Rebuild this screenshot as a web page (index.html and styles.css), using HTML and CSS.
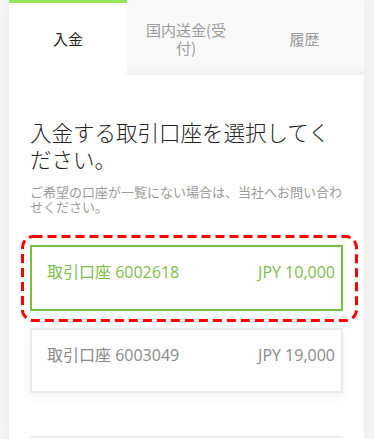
FILE: index.html
```html
<!DOCTYPE html>
<html lang="ja">
<head>
<meta charset="utf-8">
<link rel="stylesheet" href="styles.css">
</head>
<body>
<div class="wrap">
  <div class="tabs">
    <div class="tab active">入金</div>
    <div class="tab">国内送金(受付)</div>
    <div class="tab">履歴</div>
  </div>
  <div class="card">
    <h1 class="title">入金する取引口座を選択してください。</h1>
    <p class="note">ご希望の口座が一覧にない場合は、当社へお問い合わせください。</p>
    <div class="accounts">
      <div class="acct selected">
        <span class="name">取引口座 6002618</span>
        <span class="amt">JPY 10,000</span>
        <svg class="highlight" width="337" height="87" viewBox="0 0 337 87" aria-hidden="true">
          <rect x="1.5" y="1.5" width="334" height="84" rx="11" ry="11" fill="none" stroke="#ff0000" stroke-width="3" stroke-dasharray="9 5"/>
        </svg>
      </div>
      <div class="acct">
        <span class="name">取引口座 6003049</span>
        <span class="amt">JPY 19,000</span>
      </div>
      <div class="acct-more"></div>
    </div>
  </div>
</div>
</body>
</html>
```

FILE: styles.css
```css
html, body {
  margin: 0;
  padding: 0;
}
body {
  background: #f4f4f4;
  font-family: "Open Sans", "Noto Sans CJK JP", sans-serif;
  overflow: hidden;
  height: 439px;
}
.wrap {
  margin-left: 9px;
  width: 355px;
  box-shadow: 0 0 12px rgba(0, 0, 0, 0.04);
}
.tabs {
  display: grid;
  grid-template-columns: 118px 118px 119px;
  height: 75px;
  background: #f9f9f9;
  box-shadow: inset 0 -14px 14px -12px rgba(0, 0, 0, 0.06);
}
.tab {
  display: flex;
  align-items: center;
  justify-content: center;
  text-align: center;
  padding: 3px 14px 0;
  font-size: 15px;
  line-height: 18px;
  color: #9a9a9a;
  font-family: "Noto Sans CJK JP", "Open Sans", sans-serif;
}
.tab.active {
  background: #ffffff;
  color: #222222;
  padding-top: 0;
  border-top: 3px solid #96e65a;
}
.card {
  background: #ffffff;
  padding: 43px 21px 0;
  height: 321px;
}
.title {
  margin: 0;
  font-family: "Noto Sans CJK JP", sans-serif;
  font-weight: 300;
  font-size: 21.5px;
  line-height: 27px;
  color: #222222;
}
.note {
  margin: 12px 0 0;
  font-family: "Noto Sans CJK JP", sans-serif;
  font-size: 13px;
  line-height: 15px;
  color: #9a9a9a;
}
.accounts {
  margin-top: 31px;
  display: flex;
  flex-direction: column;
  gap: 17px;
}
.acct {
  position: relative;
  display: flex;
  justify-content: space-between;
  height: 65px;
  box-sizing: border-box;
  padding: 14px 6px 0 15px;
  border: 2px solid #ebebeb;
  font-size: 16px;
  line-height: 22px;
  color: #8a8a8a;
  box-shadow: 0 4px 10px rgba(0, 0, 0, 0.05);
}
.acct.selected {
  height: 66px;
  border-color: #79bf45;
  color: #80bd4c;
  box-shadow: 0 0 8px rgba(121, 191, 69, 0.15);
}
.highlight {
  position: absolute;
  left: -11px;
  top: -12px;
}
.acct-more {
  margin-top: 26px;
  border-top: 2px solid #ebebeb;
  height: 10px;
}
```
